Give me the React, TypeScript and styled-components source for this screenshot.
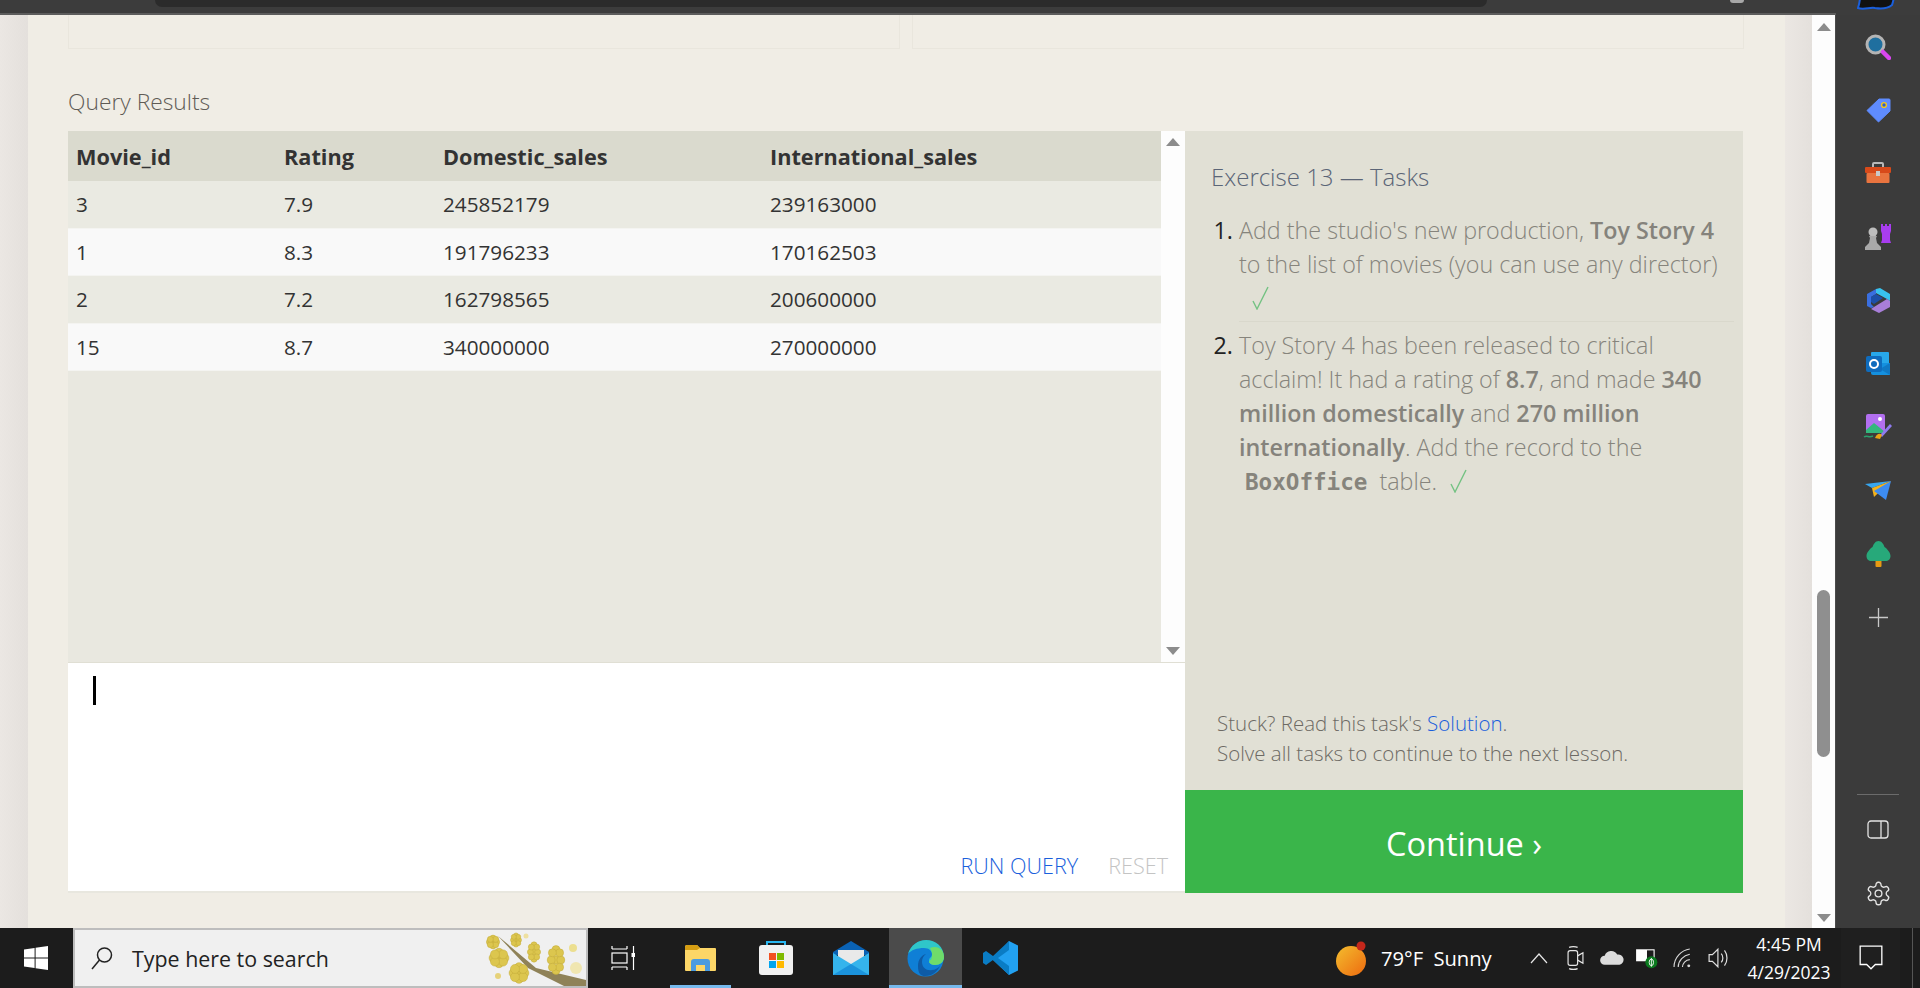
import React from 'react'
import styled, { createGlobalStyle } from 'styled-components'

const Global = createGlobalStyle`
  html, body { margin: 0; padding: 0; height: 100%; overflow: hidden; }
  * { box-sizing: border-box; }
  body { font-family: "Open Sans", "Liberation Sans", sans-serif; }
`

const Screen = styled.div`
  width: 1920px;
  height: 988px;
  display: flex;
  flex-direction: column;
  overflow: hidden;
  background: #3b3b3b;
`

const TopStrip = styled.div`
  height: 15px;
  flex: none;
  background: #3c3c3c;
  display: flex;
  flex-direction: column;
`

const StripBody = styled.div`
  height: 13px;
  display: flex;
  align-items: flex-start;
  padding-left: 155px;
`

const StripLine = styled.div`
  height: 2px;
  width: 1836px;
  background: #5c5c5c;
`

const TopPill = styled.div`
  width: 1332px;
  height: 7px;
  background: #2b2b2b;
  border-radius: 0 0 10px 10px;
`

const TabDot = styled.div`
  width: 14px;
  height: 3px;
  margin-left: 243px;
  background: #a8a8a8;
  border-radius: 0 0 7px 7px;
`

const WaveLogo = styled.svg`
  margin-left: 113px;
`

const Middle = styled.div`
  flex: 1;
  display: flex;
  min-height: 0;
`

const Gutter = styled.div<{ $w: number }>`
  flex: none;
  width: ${({ $w }) => $w}px;
  background: linear-gradient(90deg, #ebe7e3, #e4e0dc);
`

const Page = styled.div`
  flex: none;
  width: 1757px;
  background: #f0ede5;
  padding: 0 41px 0 40px;
`

const TopCards = styled.div`
  display: grid;
  grid-template-columns: 832px 832px;
  gap: 12px;
`

const EmptyCard = styled.div`
  height: 34px;
  border: 1px solid #e9e6dd;
  border-top: none;
`

const ResultsLabel = styled.div`
  margin-top: 38px;
  height: 44px;
  line-height: 30px;
  font-size: 22.8px;
  font-weight: 300;
  color: #5f5b55;
`

const Workspace = styled.div`
  display: flex;
  width: 1676px;
  height: 762px;
`

const LeftColumn = styled.div`
  width: 1117px;
  display: flex;
  flex-direction: column;
`

const ResultsPane = styled.div`
  height: 532px;
  flex: none;
  display: flex;
  background: #e9e8e0;
  border-bottom: 1px solid #e0dfd4;
`

const ResultsTable = styled.div`
  flex: 1;
  min-width: 0;
`

const Row = styled.div<{ $kind: 'head' | 'odd' | 'even' }>`
  display: grid;
  grid-template-columns: 208px 159px 327px 1fr;
  padding-left: 8px;
  align-items: center;
  height: ${({ $kind }) => ($kind === 'head' ? '50px' : '47.5px')};
  font-size: ${({ $kind }) => ($kind === 'head' ? 21.7 : 20.7)}px;
  color: #333;
  font-weight: ${({ $kind }) => ($kind === 'head' ? 700 : 400)};
  background: ${({ $kind }) => ($kind === 'head' ? '#dadace' : $kind === 'odd' ? '#eaeae2' : '#f9f9f9')};
  border-bottom: ${({ $kind }) => ($kind === 'head' ? 'none' : '1px solid #f4f4f1')};
`

const PaneScroll = styled.div`
  width: 24px;
  flex: none;
  background: #fdfdfd;
  display: flex;
  flex-direction: column;
  justify-content: space-between;
  align-items: center;
  padding: 7px 0;
`

const Arrow = styled.div<{ $down?: boolean }>`
  width: 0;
  height: 0;
  border-left: 7px solid transparent;
  border-right: 7px solid transparent;
  ${({ $down }) => ($down ? 'border-top: 8px solid #8c8c8c;' : 'border-bottom: 8px solid #8c8c8c;')}
`

const Editor = styled.div`
  flex: 1;
  background: #fff;
  border-bottom: 2px solid #e8e7df;
  padding: 13px 17px 0 25px;
  display: flex;
  flex-direction: column;
  justify-content: space-between;
`

const Caret = styled.div`
  width: 3px;
  height: 29px;
  background: #000;
`

const EditorActions = styled.div`
  display: flex;
  justify-content: flex-end;
  gap: 30px;
  height: 40px;
  font-size: 21.6px;
  font-weight: 300;
  align-items: flex-start;
`

const ActionLink = styled.span<{ $muted?: boolean }>`
  color: ${({ $muted }) => ($muted ? '#c4c4c4' : '#1a5fdc')};
`

const TaskPanel = styled.div`
  width: 558px;
  flex: none;
  height: 762px;
  display: flex;
  flex-direction: column;
  background: #e1e0d5;
`

const TaskBody = styled.div`
  flex: 1;
  padding: 31px 9px 0 26px;
  display: flex;
  flex-direction: column;
`

const TaskTitle = styled.div`
  font-size: 24px;
  font-weight: 300;
  color: #5b6577;
  line-height: 30px;
`

const TaskList = styled.ol`
  margin: 21px 0 0;
  padding: 0 0 0 28px;
  font-size: 23.3px;
  line-height: 34px;
  color: #222;
  li + li {
    border-top: 1px solid #d9d8cc;
    margin-top: 6px;
    padding-top: 6px;
  }
`

const TaskText = styled.span`
  font-weight: 300;
  color: #86847c;
  b { font-weight: 600; color: #85837c; }
`

const Code = styled.code`
  font-family: "DejaVu Sans Mono", "Liberation Mono", monospace;
  font-weight: 700;
  font-size: 22.6px;
  padding: 0 6px;
`

const Check = styled.svg`
  margin-left: 13px;
  vertical-align: -3px;
`

const TaskHint = styled.div`
  margin-top: auto;
  margin-left: 6px;
  padding-bottom: 22px;
  font-size: 20.5px;
  font-weight: 300;
  line-height: 30px;
  color: #6d6a64;
  a { color: #1a5fdc; text-decoration: none; }
`

const ContinueButton = styled.div`
  height: 103px;
  flex: none;
  background: #3ab54a;
  color: #fff;
  font-size: 32.5px;
  font-weight: 400;
  display: flex;
  align-items: center;
  justify-content: center;
  padding-top: 3px;
`

const PageScroll = styled.div`
  width: 23px;
  flex: none;
  background: #fdfdfd;
  display: flex;
  flex-direction: column;
  align-items: center;
  padding: 8px 0 6px;
`

const Thumb = styled.div`
  width: 13px;
  height: 167px;
  margin-top: 559px;
  background: #8f8f8f;
  border-radius: 7px;
`

const ScrollSpacer = styled.div`
  flex: 1;
`

const Sidebar = styled.div`
  flex: 1;
  background: #3b3b3b;
  display: flex;
  flex-direction: column;
  align-items: center;
  border-left: 1px solid #4a4a4a;
  padding-bottom: 3px;
`

const SideIcon = styled.div`
  width: 32px;
  height: 63.4px;
  flex: none;
  display: flex;
  align-items: center;
  justify-content: center;
`

const SideRule = styled.div`
  width: 42px;
  height: 1px;
  background: #6b6b6b;
  margin-top: auto;
  margin-bottom: 3px;
`

const Taskbar = styled.div`
  height: 60px;
  flex: none;
  background: #1c1c1c;
  display: flex;
  align-items: stretch;
  color: #fff;
`

const StartButton = styled.div`
  width: 73px;
  display: flex;
  align-items: center;
  justify-content: center;
  padding-right: 2px;
`

const SearchBox = styled.div`
  width: 515px;
  background: #f0f0f0;
  border: 2px solid #bdbdbd;
  color: #222;
  display: flex;
  align-items: center;
  font-size: 21.4px;
  padding-left: 14px;
  gap: 17px;
  overflow: hidden;
  position: relative;
`

const SearchArt = styled.svg`
  position: absolute;
  right: 0;
  top: 0;
`

const TaskViewSlot = styled.div`
  width: 75px;
  display: flex;
  align-items: center;
  justify-content: center;
  padding-right: 5px;
`

const AppSlot = styled.div`
  width: 75px;
  display: flex;
  justify-content: center;
`

const AppTile = styled.div<{ $active?: boolean; $open?: boolean }>`
  width: ${({ $active }) => ($active ? 73 : 61)}px;
  display: flex;
  align-items: center;
  justify-content: center;
  background: ${({ $active }) => ($active ? '#4b4b4b' : 'transparent')};
  border-bottom: 3px solid ${({ $open }) => ($open ? '#76b9ed' : 'transparent')};
  padding-top: 3px;
`

const TaskbarSpacer = styled.div`
  flex: 1;
`

const Weather = styled.div`
  display: flex;
  align-items: center;
  gap: 15px;
  font-size: 20.2px;
  width: 185px;
  flex: none;
  word-spacing: 5px;
`

const Tray = styled.div`
  display: grid;
  grid-template-columns: repeat(6, 36px);
  flex: none;
`

const TraySlot = styled.div`
  display: flex;
  align-items: center;
  justify-content: center;
`

const Clock = styled.div`
  width: 104px;
  flex: none;
  text-align: center;
  font-size: 17.5px;
  line-height: 28px;
  padding-top: 2px;
`

const Notify = styled.div`
  width: 59px;
  flex: none;
  background: #1f1f1f;
  display: flex;
  align-items: center;
  justify-content: center;
`

const Peek = styled.div`
  width: 8px;
  flex: none;
  margin-left: 12px;
  border-left: 1px solid #555;
`

const rows = [
  ['3', '7.9', '245852179', '239163000'],
  ['1', '8.3', '191796233', '170162503'],
  ['2', '7.2', '162798565', '200600000'],
  ['15', '8.7', '340000000', '270000000'],
]

// flower clusters on the search box art: cx, cy, rx, ry
const blossoms = [
  [7, 12, 6, 6],
  [13, 28, 9, 8],
  [30, 10, 5, 7],
  [48, 22, 6, 11],
  [70, 30, 8, 16],
  [33, 43, 9, 9],
]

// bump offsets around each blossom, as a share of its radii
const bumps = [
  [0, 0],
  [0.6, 0],
  [-0.6, 0],
  [0, 0.65],
  [0, -0.65],
  [0.45, 0.45],
  [-0.45, 0.45],
  [0.45, -0.45],
  [-0.45, -0.45],
]

const CheckMark: React.FC = () => (
  <Check width="17" height="24" viewBox="0 0 17 24" fill="none" stroke="#74c283" strokeWidth="1.4">
    <path d="M1 15l4 8L16 1" />
  </Check>
)

const sideIcons = [
  <svg key="search" width="26" height="26" viewBox="0 0 26 26">
    <circle cx="10.5" cy="10.5" r="8.5" fill="#1f6f9f" stroke="#b4b4b4" strokeWidth="3" />
    <path d="M18 18l6 6" stroke="#d946ef" strokeWidth="4.5" strokeLinecap="round" />
  </svg>,
  <svg key="tag" width="25" height="25" viewBox="0 0 25 25">
    <path d="M13 1h10a1 1 0 0 1 1 1v11L12.5 24 1 12.5z" fill="#5f8cff" stroke="#5f8cff" strokeLinejoin="round" />
    <circle cx="18" cy="7" r="2.4" fill="#2b5fd0" stroke="#f5c518" strokeWidth="1.4" />
  </svg>,
  <svg key="box" width="28" height="22" viewBox="0 0 28 22">
    <path d="M9 5V2a1 1 0 0 1 1-1h8a1 1 0 0 1 1 1v3" fill="none" stroke="#b8b8b8" strokeWidth="2" />
    <rect x="1" y="5" width="26" height="6" rx="1" fill="#d84a1a" />
    <rect x="2.5" y="11" width="23" height="10" rx="1" fill="#e9743f" />
    <rect x="12" y="9" width="4" height="5" fill="#c9c9c9" />
  </svg>,
  <svg key="chess" width="28" height="28" viewBox="0 0 28 28">
    <circle cx="9" cy="9" r="4.5" fill="#bdbdbd" />
    <path d="M5 13h8l-1 2 1 5 4 4v3H1v-3l4-4 1-5z" fill="#a9a9a9" />
    <path d="M17 1h2v2h2V1h2v2h2V1h2v7l-1 3v6l1 3H17l1-3v-6l-1-3z" fill="#a83df0" />
  </svg>,
  <svg key="m365" width="25" height="27" viewBox="0 0 25 27">
    <path d="M10 2l4-1 10 6v7l-3-2-11-6z" fill="#38c3ee" />
    <path d="M1 7l9-5v5l-5 3v7l3 3-3 1-4-2z" fill="#3a6fe0" />
    <path d="M8 20l13-8 3 2v6l-11 6-8-4z" fill="#a87ed8" />
    <path d="M10 7l7 4-9 6-3-2v-5z" fill="#1d4fa8" />
  </svg>,
  <svg key="outlook" width="25" height="25" viewBox="0 0 25 25">
    <rect x="5" y="1" width="18" height="12" rx="1" fill="#28a8ea" />
    <path d="M5 12h19v12H7a2 2 0 0 1-2-2z" fill="#1490df" />
    <path d="M24 12v12l-10-6z" fill="#0f78c4" />
    <rect x="0" y="5" width="16" height="16" rx="2" fill="#0f6cbd" />
    <circle cx="8" cy="13" r="4" fill="none" stroke="#fff" strokeWidth="2" />
  </svg>,
  <svg key="paint" width="30" height="28" viewBox="0 0 30 28">
    <rect x="3" y="1" width="19" height="19" rx="2" fill="#b26ff0" />
    <circle cx="17" cy="6" r="2" fill="#fff" />
    <path d="M3 17l8-7 11 9v1H3z" fill="#34b77d" />
    <path d="M17 22l10-11 2 2-10 11z" fill="#8f7bf0" />
    <path d="M12 25c2-5 5-5 7-3l-2 4z" fill="#e8a317" />
    <path d="M1 24c3-2 5 1 9-1" stroke="#2aa06d" strokeWidth="1.5" fill="none" />
  </svg>,
  <svg key="send" width="27" height="19" viewBox="0 0 27 19">
    <path d="M0 3l26-3-19 7z" fill="#37a6f0" />
    <path d="M26 0L7 7l2 9z" fill="#f5b21b" />
    <path d="M26 0L9 10l12 9z" fill="#3d8cf2" />
  </svg>,
  <svg key="tree" width="25" height="27" viewBox="0 0 25 27">
    <rect x="9.5" y="20" width="6" height="7" rx="1" fill="#e79a13" />
    <path d="M12.5 1c3 0 5 3 6 6 3 2 6 6 6 9 0 3-2 5-5 5H5.5c-3 0-5-2-5-5 0-3 3-7 6-9 1-3 3-6 6-6z" fill="#27a97a" />
  </svg>,
  <svg key="plus" width="19" height="19" viewBox="0 0 19 19">
    <path d="M9.5 0v19M0 9.5h19" stroke="#c8c8c8" strokeWidth="1.3" />
  </svg>,
]

const App: React.FC = () => {
  return (
    <Screen>
      <Global />
      <TopStrip>
        <StripBody>
          <TopPill />
          <TabDot />
          <WaveLogo width="38" height="10" viewBox="0 0 38 10" fill="#111" stroke="#1a5fdc" strokeWidth="2">
            <path d="M3 -4c0 5-1 9-2 12 6 2 12-1 17 0 6 1 12 1 17-3 1-3 2-6 2-10z" />
          </WaveLogo>
        </StripBody>
        <StripLine />
      </TopStrip>
      <Middle>
        <Gutter $w={28} />
        <Page>
          <TopCards>
            <EmptyCard />
            <EmptyCard />
          </TopCards>
          <ResultsLabel>Query Results</ResultsLabel>
          <Workspace>
            <LeftColumn>
              <ResultsPane>
                <ResultsTable>
                  <Row $kind="head">
                    <span>Movie_id</span>
                    <span>Rating</span>
                    <span>Domestic_sales</span>
                    <span>International_sales</span>
                  </Row>
                  {rows.map((row, i) => (
                    <Row key={row[0]} $kind={i % 2 === 0 ? 'odd' : 'even'}>
                      {row.map((cell) => (
                        <span key={cell}>{cell}</span>
                      ))}
                    </Row>
                  ))}
                </ResultsTable>
                <PaneScroll>
                  <Arrow />
                  <Arrow $down />
                </PaneScroll>
              </ResultsPane>
              <Editor>
                <Caret />
                <EditorActions>
                  <ActionLink>RUN QUERY</ActionLink>
                  <ActionLink $muted>RESET</ActionLink>
                </EditorActions>
              </Editor>
            </LeftColumn>
            <TaskPanel>
              <TaskBody>
                <TaskTitle>Exercise 13 — Tasks</TaskTitle>
                <TaskList>
                  <li>
                    <TaskText>
                      Add the studio's new production, <b>Toy Story 4</b> to the list of movies (you can use any director)
                      <CheckMark />
                    </TaskText>
                  </li>
                  <li>
                    <TaskText>
                      Toy Story 4 has been released to critical acclaim! It had a rating of <b>8.7</b>, and made{' '}
                      <b>340 million domestically</b> and <b>270 million internationally</b>. Add the record to the{' '}
                      <Code>BoxOffice</Code> table.
                      <CheckMark />
                    </TaskText>
                  </li>
                </TaskList>
                <TaskHint>
                  Stuck? Read this task's <a href="#solution">Solution</a>.
                  <br />
                  Solve all tasks to continue to the next lesson.
                </TaskHint>
              </TaskBody>
              <ContinueButton>Continue ›</ContinueButton>
            </TaskPanel>
          </Workspace>
        </Page>
        <Gutter $w={27} />
        <PageScroll>
          <Arrow />
          <Thumb />
          <ScrollSpacer />
          <Arrow $down />
        </PageScroll>
        <Sidebar>
          {sideIcons.map((icon) => (
            <SideIcon key={icon.key}>{icon}</SideIcon>
          ))}
          <SideRule />
          <SideIcon>
            <svg width="22" height="20" viewBox="0 0 22 20">
              <rect x="1" y="1" width="20" height="17" rx="3" fill="none" stroke="#e4e4e4" strokeWidth="1.3" />
              <path d="M14 1v17" stroke="#e4e4e4" strokeWidth="1.3" />
            </svg>
          </SideIcon>
          <SideIcon>
            <svg width="27" height="27" viewBox="0 0 24 24" fill="none" stroke="#e4e4e4" strokeWidth="1.2">
              <path d="M12.22 2h-.44a2 2 0 0 0-2 2v.18a2 2 0 0 1-1 1.73l-.43.25a2 2 0 0 1-2 0l-.15-.08a2 2 0 0 0-2.73.73l-.22.38a2 2 0 0 0 .73 2.73l.15.1a2 2 0 0 1 1 1.72v.51a2 2 0 0 1-1 1.74l-.15.09a2 2 0 0 0-.73 2.73l.22.38a2 2 0 0 0 2.73.73l.15-.08a2 2 0 0 1 2 0l.43.25a2 2 0 0 1 1 1.73V20a2 2 0 0 0 2 2h.44a2 2 0 0 0 2-2v-.18a2 2 0 0 1 1-1.73l.43-.25a2 2 0 0 1 2 0l.15.08a2 2 0 0 0 2.73-.73l.22-.39a2 2 0 0 0-.73-2.73l-.15-.08a2 2 0 0 1-1-1.74v-.5a2 2 0 0 1 1-1.74l.15-.09a2 2 0 0 0 .73-2.73l-.22-.38a2 2 0 0 0-2.73-.73l-.15.08a2 2 0 0 1-2 0l-.43-.25a2 2 0 0 1-1-1.73V4a2 2 0 0 0-2-2z" />
              <circle cx="12" cy="12" r="3" />
            </svg>
          </SideIcon>
        </Sidebar>
      </Middle>
      <Taskbar>
        <StartButton>
          <svg width="24" height="24" viewBox="0 0 24 24" fill="#fff">
            <path d="M0 3.4l10.6-1.5v9.6H0zM11.6 1.7L24 0v11.5H11.6zM0 12.5h10.6v9.6L0 20.6zM11.6 12.5H24V24l-12.4-1.7z" />
          </svg>
        </StartButton>
        <SearchBox>
          <svg width="26" height="26" viewBox="0 0 26 26" fill="none" stroke="#222" strokeWidth="1.5">
            <circle cx="15.5" cy="10" r="7" />
            <path d="M10.5 15L3 24" />
          </svg>
          Type here to search
          <SearchArt width="100" height="56" viewBox="0 0 100 56">
            <path d="M12 6L50 38l50 12v6H78L42 38z" fill="#8f8258" />
            {blossoms.map(([cx, cy, rx, ry]) => (
              <g key={`${cx}-${cy}`}>
                {bumps.map(([dx, dy]) => (
                  <circle key={`${dx}/${dy}`} cx={cx + dx * rx} cy={cy + dy * ry} r={Math.max(2.5, rx * 0.5)} fill="#dcc64e" stroke="#c2ab3a" strokeWidth="0.5" />
                ))}
              </g>
            ))}
            <circle cx="40" cy="6" r="2.5" fill="#eee0a0" />
            <circle cx="87" cy="18" r="4" fill="#ecdf90" />
            <circle cx="90" cy="38" r="6" fill="#f0e6b0" />
            <circle cx="12" cy="46" r="3" fill="#e6d27a" />
          </SearchArt>
        </SearchBox>
        <TaskViewSlot>
          <svg width="24" height="26" viewBox="0 0 24 26" fill="none" stroke="#fff" strokeWidth="1.2">
            <path d="M1 4V1M16 4V1M1 4h15M1 25v-3M16 25v-3M1 22h15M22.5 1v24" />
            <rect x="1" y="8" width="15" height="10" />
            <rect x="20.5" y="8" width="4" height="4" fill="#fff" stroke="none" />
          </svg>
        </TaskViewSlot>
        <AppSlot>
          <AppTile $open>
            <svg width="33" height="28" viewBox="0 0 33 28">
              <path d="M1 3a2 2 0 0 1 2-2h10l3 3h15a1 1 0 0 1 1 1v21a1 1 0 0 1-1 1H2a1 1 0 0 1-1-1z" fill="#fcd667" />
              <path d="M1 3a2 2 0 0 1 2-2h10l3 3-3 2H1z" fill="#d59d12" />
              <path d="M7 27v-9a3 3 0 0 1 3-3h13a3 3 0 0 1 3 3v9h-5v-6h-9v6z" fill="#4a9be0" />
            </svg>
          </AppTile>
        </AppSlot>
        <AppSlot>
          <AppTile>
            <svg width="36" height="36" viewBox="0 0 36 36">
              <path d="M9 11V2h18v9" fill="none" stroke="#29b6f0" strokeWidth="2" />
              <rect x="1" y="5" width="34" height="30" rx="3" fill="#f1f1f1" />
              <rect x="11" y="13" width="7" height="7" fill="#f25022" />
              <rect x="19" y="13" width="7" height="7" fill="#7fba00" />
              <rect x="11" y="21" width="7" height="7" fill="#00a4ef" />
              <rect x="19" y="21" width="7" height="7" fill="#ffb900" />
            </svg>
          </AppTile>
        </AppSlot>
        <AppSlot>
          <AppTile>
            <svg width="36" height="36" viewBox="0 0 36 36">
              <path d="M0 12L18 1l18 11v3H0z" fill="#0a62b4" />
              <path d="M5 10h26v8L18 25 5 18z" fill="#e9e9e9" />
              <path d="M0 13l18 11 18-11v22H0z" fill="#35b4ec" />
              <path d="M0 35l18-11 18 11z" fill="#1b93dc" />
            </svg>
          </AppTile>
        </AppSlot>
        <AppSlot>
          <AppTile $active $open>
            <svg width="37" height="37" viewBox="0 0 37 37">
              <circle cx="18.5" cy="18.5" r="18" fill="#0f7fd6" />
              <path d="M1 14C4 5 11 0 19 0c10 0 18 7 18 17 0 5-4 8-9 8-4 0-6-2-6-4 0-4 3-3 3-7 0-3-3-6-8-6-7 0-13 2-16 6z" fill="#2fc6c9" />
              <path d="M37 17c0 5-4 8-9 8-3 0-5-1-6-3 2-3 3-2 3-8 0-2-1-4-2-6 8-3 14 2 14 9z" fill="#6fdc6a" />
              <path d="M33 26c-3 6-8 10-15 10-4 0-7-2-7-10 0-7 4-11 8-12-3 2-4 5-4 8 0 6 5 9 10 8 3 0 6-2 8-4z" fill="#0e5ba6" />
            </svg>
          </AppTile>
        </AppSlot>
        <AppSlot>
          <AppTile>
            <svg width="36" height="36" viewBox="0 0 36 36">
              <path d="M26 1l9 4.5v25L26 35 10 20z" fill="#22a1f1" />
              <path d="M26 1L10 16 3 11 0 13v10l3 2 7-5 16 15V26L15 18 26 10z" fill="#0a7cc4" />
            </svg>
          </AppTile>
        </AppSlot>
        <TaskbarSpacer />
        <Weather>
          <svg width="30" height="36" viewBox="0 0 30 36">
            <defs>
              <linearGradient id="sun" x1="0" y1="0" x2="1" y2="1">
                <stop offset="0" stopColor="#f3bd2e" />
                <stop offset="1" stopColor="#ee6a0f" />
              </linearGradient>
            </defs>
            <ellipse cx="15" cy="21" rx="15" ry="15" fill="url(#sun)" />
            <circle cx="25" cy="6" r="4.5" fill="#c4271b" />
          </svg>
          79°F Sunny
        </Weather>
        <Tray>
          <TraySlot>
            <svg width="18" height="12" viewBox="0 0 18 12" fill="none" stroke="#e6e6e6" strokeWidth="1.2">
              <path d="M1 11l8-9 8 9" />
            </svg>
          </TraySlot>
          <TraySlot>
            <svg width="17" height="26" viewBox="0 0 16 24" fill="none" stroke="#e6e6e6" strokeWidth="1.1">
              <rect x="1" y="5" width="9" height="14" rx="2" />
              <path d="M10 10l5-3v10l-5-3M2 2c2-1 6-1 8 0M2 22c2 1 6 1 8 0" />
            </svg>
          </TraySlot>
          <TraySlot>
            <svg width="25" height="16" viewBox="0 0 22 14">
              <path d="M5 13a4 4 0 0 1 0-8 6 6 0 0 1 11-1 4.5 4.5 0 0 1 2 9z" fill="#dcdcdc" />
            </svg>
          </TraySlot>
          <TraySlot>
            <svg width="24" height="24" viewBox="0 0 22 22">
              <rect x="1" y="3" width="17" height="11" fill="#fff" />
              <rect x="11" y="4" width="6" height="9" fill="#1c1c1c" />
              <circle cx="15" cy="15" r="5.5" fill="#0a7a1e" />
              <path d="M15 11v8M13 15a2 3 0 0 1 4 0 2 3 0 0 1-4 0" stroke="#fff" strokeWidth="0.8" fill="none" />
            </svg>
          </TraySlot>
          <TraySlot>
            <svg width="21" height="21" viewBox="0 0 20 20" fill="none" stroke="#d8d8d8" strokeWidth="1.1">
              <path d="M1 18C1 9 8 2 16 1M5 18c0-6 5-11 11-12M9 18c0-3 3-7 7-7" />
              <circle cx="15" cy="17" r="1.4" fill="#d8d8d8" stroke="none" />
            </svg>
          </TraySlot>
          <TraySlot>
            <svg width="22" height="22" viewBox="0 0 20 20" fill="none" stroke="#dedede" strokeWidth="1.1">
              <path d="M1 7h3l5-5v16l-5-5H1zM12 6c2 2 2 6 0 8M15 3c3 4 3 10 0 14" />
            </svg>
          </TraySlot>
        </Tray>
        <Clock>
          4:45 PM
          <br />
          4/29/2023
        </Clock>
        <Notify>
          <svg width="24" height="26" viewBox="0 0 22 24" fill="none" stroke="#fff" strokeWidth="1.2">
            <path d="M1 1h20v17h-6l-4 4-4-4H1z" />
          </svg>
        </Notify>
        <Peek />
      </Taskbar>
    </Screen>
  )
}

export default App
